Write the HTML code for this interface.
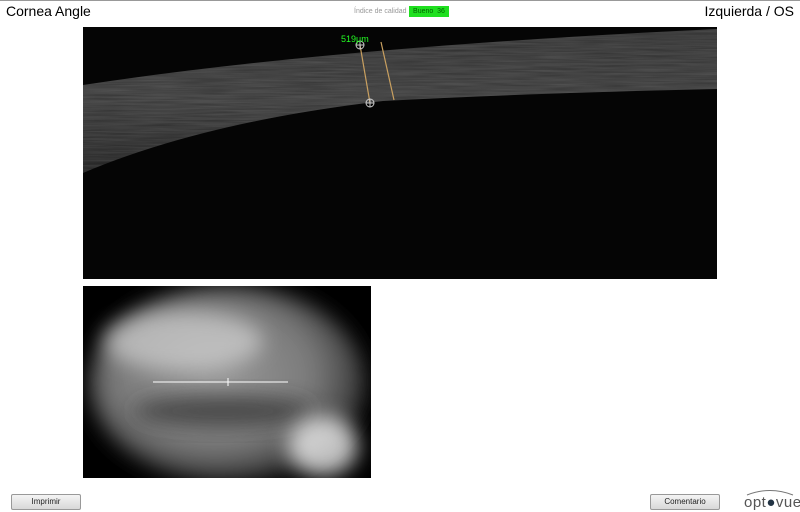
<!DOCTYPE html>
<html><head><style>
body{margin:0;width:800px;height:512px;background:#fff;position:relative;overflow:hidden;font-family:"Liberation Sans",sans-serif}
.t{position:absolute;font-size:14px;color:#000}
.btn{position:absolute;height:14px;border:1px solid #999;border-radius:2px;background:linear-gradient(#f4f4f4,#d8d8d8);font-size:8px;text-align:center;line-height:14px;color:#222}
</style></head><body>
<div style="position:absolute;left:0;top:0;width:800px;height:1px;background:#999"></div>
<div class="t" style="left:6px;top:3px">Cornea Angle</div>
<div class="t" style="right:6px;top:3px">Izquierda / OS</div>
<div style="position:absolute;left:354px;top:8px;font-size:7px;color:#999">Índice de calidad</div>
<div style="position:absolute;left:409px;top:6px;width:40px;height:11px;background:#1fe01f;font-size:7px;line-height:11px;text-align:center;color:#060">Bueno &nbsp;36</div>
<svg style="position:absolute;left:83px;top:27px" width="634" height="252">
<defs><linearGradient id="g" x1="0" y1="0" x2="0" y2="1"><stop offset="0" stop-color="#2c2c2c"/><stop offset="0.5" stop-color="#363636"/><stop offset="1" stop-color="#1a1a1a"/></linearGradient>
<filter id="n"><feTurbulence type="fractalNoise" baseFrequency="0.02 0.6" numOctaves="2"/><feColorMatrix values="0 0 0 0 0.5 0 0 0 0 0.5 0 0 0 0 0.5 0 0 0 0.25 0"/><feComposite in2="SourceGraphic" operator="in"/></filter></defs>
<rect width="634" height="252" fill="#050505"/>
<path d="M0 58 Q250 20 634 2 L634 62 Q450 66 300 74 Q120 95 0 146 Z" fill="url(#g)"/>
<path d="M0 58 Q250 20 634 2 L634 62 Q450 66 300 74 Q120 95 0 146 Z" fill="#fff" filter="url(#n)"/>
<line x1="277" y1="18" x2="287" y2="76" stroke="#c9a060" stroke-width="1.2"/>
<line x1="298" y1="15" x2="311" y2="73" stroke="#c9a060" stroke-width="1.2"/>
<circle cx="277" cy="18" r="4" fill="none" stroke="#ccc"/><path d="M273 18h8M277 14v8" stroke="#ccc"/>
<circle cx="287" cy="76" r="4" fill="none" stroke="#ccc"/><path d="M283 76h8M287 72v8" stroke="#ccc"/>
<text x="258" y="15" font-size="9" fill="#2f2" font-family="Liberation Sans">519μm</text>
</svg>
<svg style="position:absolute;left:83px;top:286px" width="288" height="192">
<defs><radialGradient id="f" cx="0.45" cy="0.45" r="0.6"><stop offset="0" stop-color="#999"/><stop offset="0.6" stop-color="#7a7a7a"/><stop offset="0.85" stop-color="#444"/><stop offset="1" stop-color="#111"/></radialGradient>
<filter id="bb" x="-50%" y="-50%" width="200%" height="200%"><feGaussianBlur stdDeviation="10"/></filter></defs>
<rect width="288" height="192" fill="#000"/>
<ellipse cx="145" cy="98" rx="138" ry="98" fill="url(#f)" filter="url(#bb)"/>
<ellipse cx="100" cy="55" rx="80" ry="30" fill="#ddd" opacity="0.6" filter="url(#bb)"/>
<ellipse cx="140" cy="125" rx="90" ry="16" fill="#333" opacity="0.7" filter="url(#bb)"/>
<ellipse cx="240" cy="160" rx="35" ry="30" fill="#eee" opacity="0.8" filter="url(#bb)"/>
<line x1="70" y1="96" x2="205" y2="96" stroke="#fff" stroke-width="1"/>
<line x1="145" y1="92" x2="145" y2="100" stroke="#fff"/>
</svg>
<div class="btn" style="left:11px;top:494px;width:68px">Imprimir</div>
<div class="btn" style="left:650px;top:494px;width:68px">Comentario</div>
<div style="position:absolute;left:744px;top:494px;font-size:15px;color:#555;letter-spacing:0.5px">opt<span style="color:#234">●</span>vue</div>
<svg style="position:absolute;left:745px;top:488px" width="50" height="8"><path d="M2 7 Q25 -2 48 7" fill="none" stroke="#777"/></svg>
</body></html>
